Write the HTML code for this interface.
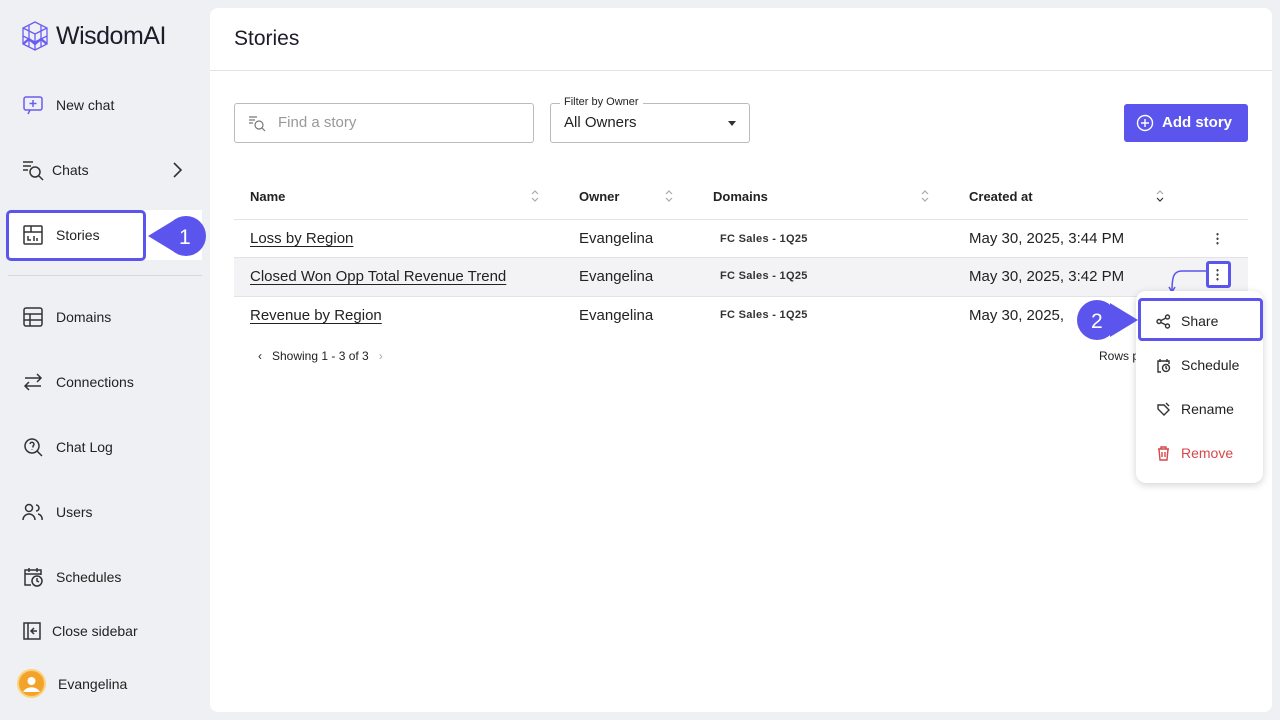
<!DOCTYPE html><html><head><style>
*{box-sizing:border-box;margin:0;padding:0}
body{width:1280px;height:720px;background:#eff0f3;font-family:"Liberation Sans",sans-serif;color:#222;position:relative;overflow:hidden}
.a{position:absolute}
.nav{position:absolute;left:22px;font-size:14px;color:#222;display:flex;align-items:center;gap:12px}
.nav svg{width:22px;height:22px;fill:none;stroke:#333;stroke-width:1.5}
.main{position:absolute;left:210px;top:8px;width:1062px;height:704px;background:#fff;border-radius:8px}
.th{position:absolute;top:189px;font-size:13px;font-weight:bold;color:#222}
.td{position:absolute;font-size:15px;color:#222}
.lnk{text-decoration:underline;text-underline-offset:3px}
.dom{font-size:11px;font-weight:bold;color:#333;letter-spacing:.3px}
.hl{position:absolute;height:1px;background:#e3e3e6;left:234px;width:1014px}
.mi{position:absolute;left:1156px;font-size:14px;display:flex;align-items:center;gap:10px;color:#222}
.mi svg{width:15px;height:15px;fill:none;stroke:#333;stroke-width:1.4}
.sort{position:absolute;width:10px;height:16px}
</style></head><body>
<svg class="a" style="left:20px;top:20px" width="30" height="32" viewBox="0 0 30 32" fill="none" stroke="#6a5cf0" stroke-width="1.3"><path d="M15 2L3 8v16l12 6 12-6V8z M3 8l12 6 12-6 M15 14v16 M3 16l12 6 12-6 M9 5v22 M21 5v22"/><path d="M3 24l6-5 6 5 6-5 6 5" stroke-width="2.4"/></svg>
<div class="a" style="left:56px;top:22px;font-size:25px;color:#1c1c2a;letter-spacing:-.5px">WisdomAI</div>
<div class="nav" style="top:94px"><svg viewBox="0 0 22 22" style="stroke:#6a5cf0"><rect x="2" y="3" width="18" height="13" rx="2"/><path d="M11 6v7M7.5 9.5h7M8 16l-2 4"/></svg>New chat</div>
<div class="nav" style="top:159px;gap:8px"><svg viewBox="0 0 22 22"><path d="M1 3h10M1 7h8M1 11h5"/><circle cx="13" cy="13" r="5"/><path d="M17 17l4 4"/></svg>Chats</div>
<svg class="a" style="left:172px;top:162px" width="12" height="16" viewBox="0 0 12 16" fill="none" stroke="#333" stroke-width="1.6"><path d="M2 1l7 7-7 7"/></svg>
<div class="a" style="left:140px;top:210px;width:62px;height:50px;background:#fff"></div>
<div class="a" style="left:6px;top:210px;width:140px;height:51px;background:#fff;border:3px solid #5b55ee;border-radius:5px"></div>
<div class="nav" style="top:224px"><svg viewBox="0 0 22 22"><rect x="2" y="2" width="18" height="18" rx="1"/><path d="M2 8h18M9 2v6M6 12v4h3M12 12v5M15 14v3"/></svg>Stories</div>
<svg class="a" style="left:146px;top:214px" width="64" height="44" viewBox="0 0 64 44"><circle cx="40" cy="22" r="20" fill="#5b55ee"/><path d="M2 22L30 5v34z" fill="#5b55ee"/><text x="33" y="30" fill="#fff" font-size="21" font-family="Liberation Sans">1</text></svg>
<div class="a" style="left:8px;top:275px;width:194px;height:1px;background:#d8d8dc"></div>
<div class="nav" style="top:306px"><svg viewBox="0 0 22 22"><rect x="2" y="2" width="18" height="18" rx="2"/><path d="M2 8h18M2 14h18M8 8v12"/></svg>Domains</div>
<div class="nav" style="top:371px"><svg viewBox="0 0 22 22"><path d="M3 7h16M15 3l4 4-4 4M19 15H3M7 11l-4 4 4 4"/></svg>Connections</div>
<div class="nav" style="top:436px"><svg viewBox="0 0 22 22"><circle cx="10" cy="10" r="7"/><path d="M15 15l5 5M8 8a2 2 0 1 1 3 2v1.5M10 13.5v.5"/></svg>Chat Log</div>
<div class="nav" style="top:501px"><svg viewBox="0 0 22 22"><circle cx="7" cy="7" r="3.5"/><path d="M1 19a6 6 0 0 1 12 0M14 4a3 3 0 0 1 0 6M16 13a5 5 0 0 1 4 6"/></svg>Users</div>
<div class="nav" style="top:566px"><svg viewBox="0 0 22 22"><path d="M9 19H3V4h16v5M3 8h16M7 2v4M15 2v4"/><circle cx="15" cy="15" r="5"/><path d="M15 12v3l2 1"/></svg>Schedules</div>
<div class="nav" style="top:620px;gap:8px"><svg viewBox="0 0 22 22"><rect x="2" y="3" width="16" height="16"/><path d="M6 3v16M15 11H9M12 8l-3 3 3 3"/></svg>Close sidebar</div>
<div class="a" style="left:17px;top:669px;width:29px;height:29px;border-radius:50%;background:#f4a32a;border:2px solid #fbd27f"></div>
<svg class="a" style="left:20px;top:672px" width="23" height="23" viewBox="0 0 23 23"><circle cx="11.5" cy="9" r="4" fill="#fff"/><path d="M3 20a9 7 0 0 1 17 0" fill="#fff"/></svg>
<div class="a" style="left:58px;top:676px;font-size:14px">Evangelina</div>

<div class="main"></div>
<div class="a" style="left:234px;top:27px;font-size:21px;color:#1c1c2a">Stories</div>
<div class="a" style="left:210px;top:70px;width:1062px;height:1px;background:#e3e3e6"></div>
<div class="a" style="left:234px;top:103px;width:300px;height:40px;border:1px solid #bbb;border-radius:3px"></div>
<svg class="a" style="left:248px;top:114px" width="18" height="18" viewBox="0 0 18 18" fill="none" stroke="#777" stroke-width="1.2"><path d="M1 3h8M1 6h6M1 9h4"/><circle cx="11" cy="11" r="4"/><path d="M14 14l3 3"/></svg>
<div class="a" style="left:278px;top:114px;font-size:15px;color:#999">Find a story</div>
<div class="a" style="left:550px;top:103px;width:200px;height:40px;border:1px solid #bbb;border-radius:3px"></div>
<div class="a" style="left:560px;top:96px;font-size:11px;background:#fff;padding:0 4px;color:#222">Filter by Owner</div>
<div class="a" style="left:564px;top:114px;font-size:15px">All Owners</div>
<div class="a" style="left:728px;top:121px;width:0;height:0;border-left:4px solid transparent;border-right:4px solid transparent;border-top:5px solid #333"></div>
<div class="a" style="left:1124px;top:104px;width:124px;height:38px;background:#5b55ee;border-radius:3px;color:#fff;font-size:15px;font-weight:bold;padding:10px 0 0 38px">Add story</div>
<svg class="a" style="left:1136px;top:114px" width="18" height="18" viewBox="0 0 18 18" fill="none" stroke="#fff" stroke-width="1.4"><circle cx="9" cy="9" r="7.5"/><path d="M9 5v8M5 9h8"/></svg>

<div class="th" style="left:250px">Name</div><div class="th" style="left:579px">Owner</div><div class="th" style="left:713px">Domains</div><div class="th" style="left:969px">Created at</div>
<svg class="sort" style="left:530px;top:188px" viewBox="0 0 10 16" fill="none" stroke="#aaa" stroke-width="1.2"><path d="M2 6l3-3 3 3M2 10l3 3 3-3"/></svg>
<svg class="sort" style="left:664px;top:188px" viewBox="0 0 10 16" fill="none" stroke="#aaa" stroke-width="1.2"><path d="M2 6l3-3 3 3M2 10l3 3 3-3"/></svg>
<svg class="sort" style="left:920px;top:188px" viewBox="0 0 10 16" fill="none" stroke="#aaa" stroke-width="1.2"><path d="M2 6l3-3 3 3M2 10l3 3 3-3"/></svg>
<svg class="sort" style="left:1155px;top:188px" viewBox="0 0 10 16" fill="none" stroke-width="1.2"><path d="M2 6l3-3 3 3" stroke="#aaa"/><path d="M2 10l3 3 3-3" stroke="#333"/></svg>
<div class="hl" style="top:219px"></div>
<div class="a" style="left:234px;top:258px;width:1014px;height:38px;background:#f3f3f5"></div>
<div class="hl" style="top:257px"></div><div class="hl" style="top:296px"></div>
<div class="td lnk" style="left:250px;top:230px">Loss by Region</div><div class="td" style="left:579px;top:230px">Evangelina</div><div class="td dom" style="left:720px;top:233px">FC Sales - 1Q25</div><div class="td" style="left:969px;top:230px">May 30, 2025, 3:44 PM</div>
<div class="td lnk" style="left:250px;top:268px">Closed Won Opp Total Revenue Trend</div><div class="td" style="left:579px;top:268px">Evangelina</div><div class="td dom" style="left:720px;top:270px">FC Sales - 1Q25</div><div class="td" style="left:969px;top:268px">May 30, 2025, 3:42 PM</div>
<div class="td lnk" style="left:250px;top:307px">Revenue by Region</div><div class="td" style="left:579px;top:307px">Evangelina</div><div class="td dom" style="left:720px;top:309px">FC Sales - 1Q25</div><div class="td" style="left:969px;top:307px">May 30, 2025,</div>
<div class="a" style="left:1216px;top:232px;width:3px;height:13px;background:radial-gradient(circle,#444 1.1px,transparent 1.3px) 0 0/3px 4.5px"></div>
<div class="a" style="left:1206px;top:261px;width:25px;height:27px;border:3px solid #5b55ee;border-radius:3px;background:#fff"></div>
<div class="a" style="left:1216px;top:268px;width:3px;height:13px;background:radial-gradient(circle,#444 1.1px,transparent 1.3px) 0 0/3px 4.5px"></div>
<svg class="a" style="left:1166px;top:266px" width="44" height="30" viewBox="0 0 44 30" fill="none" stroke="#5b55ee" stroke-width="1.5"><path d="M40 5H16c-8 0-10 5-10 20"/><path d="M3 21l3 5 3-5"/></svg>
<div class="a" style="left:258px;top:349px;font-size:12px;color:#222">‹&nbsp;&nbsp; Showing 1 - 3 of 3 &nbsp;&nbsp;<span style="color:#aaa">›</span></div>
<div class="a" style="left:1099px;top:349px;font-size:12px">Rows p</div>

<div class="a" style="left:1136px;top:291px;width:127px;height:192px;background:#fff;border-radius:10px;box-shadow:0 2px 8px rgba(0,0,0,.18)"></div>
<div class="a" style="left:1138px;top:298px;width:125px;height:43px;border:3px solid #5b55ee;border-radius:4px;background:#fff"></div>
<div class="mi" style="top:313px"><svg viewBox="0 0 15 15"><circle cx="3" cy="7.5" r="2"/><circle cx="11.5" cy="3" r="2"/><circle cx="11.5" cy="12" r="2"/><path d="M5 6.5l5-2.5M5 8.5l5 2.5"/></svg>Share</div>
<div class="mi" style="top:357px"><svg viewBox="0 0 15 15"><path d="M5 14H2V3h11v3M4 1v3M11 1v3"/><circle cx="10" cy="10" r="3.5"/><path d="M10 8v2l1 1"/></svg>Schedule</div>
<div class="mi" style="top:401px"><svg viewBox="0 0 15 15"><path d="M2 3h6l5 5-5 5-6-6z"/><path d="M10 1l3 3"/></svg>Rename</div>
<div class="mi" style="top:445px;color:#d9464b"><svg viewBox="0 0 15 15" style="stroke:#d9464b"><path d="M2 3h11M5 3V1h5v2M3 3l1 11h7l1-11M6 6v5M9 6v5"/></svg>Remove</div>
<svg class="a" style="left:1074px;top:299px" width="66" height="42" viewBox="0 0 66 42"><circle cx="23" cy="21" r="20" fill="#5b55ee"/><path d="M64 21L36 4v34z" fill="#5b55ee"/><text x="17" y="29" fill="#fff" font-size="21" font-family="Liberation Sans">2</text></svg>
</body></html>
